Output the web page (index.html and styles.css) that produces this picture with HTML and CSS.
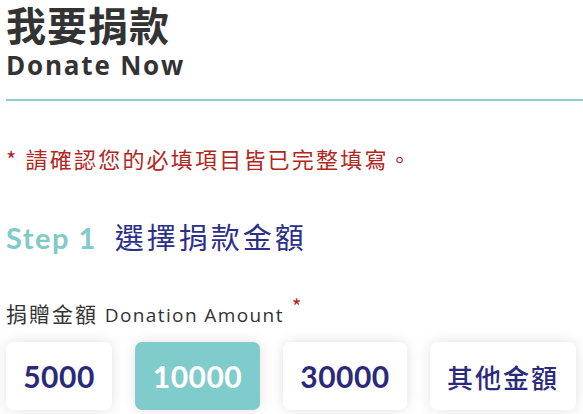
FILE: index.html
```html
<!DOCTYPE html>
<html lang="zh-Hant">
<head>
<meta charset="utf-8">
<link rel="stylesheet" href="styles.css">
</head>
<body>
<div class="page">
  <header class="head">
    <h1 class="title-zh">我要捐款</h1>
    <h2 class="title-en">Donate Now</h2>
  </header>
  <p class="notice">* 請確認您的必填項目皆已完整填寫。</p>
  <div class="step">
    <span class="step-no">Step 1</span>
    <span class="step-name">選擇捐款金額</span>
  </div>
  <div class="field-label">捐贈金額 <span class="en">Donation Amount</span><span class="req">*</span></div>
  <div class="amounts">
    <button class="amt amt-a">5000</button>
    <button class="amt amt-b active">10000</button>
    <button class="amt amt-c">30000</button>
    <button class="amt amt-d zh">其他金額</button>
  </div>
</div>
</body>
</html>
```
FILE: styles.css
```css
* { box-sizing: border-box; }
html, body { margin: 0; padding: 0; background: #fff; }
body { font-family: "Noto Sans CJK TC", "Noto Sans", sans-serif; }
.page { width: 583px; height: 414px; overflow: hidden; padding-left: 6px; }
.head { border-bottom: 2px solid #8fd0cf; padding-bottom: 17px; }
.title-zh {
  margin: 0; font-size: 40px; line-height: 48px; font-weight: 700;
  color: #333; letter-spacing: 1px;
}
.title-en {
  margin: 0; font-family: "Open Sans", sans-serif; font-size: 26px; line-height: 34px;
  font-weight: 700; color: #333; letter-spacing: 1.8px;
}
.notice {
  margin: 42px 0 0; font-size: 22px; line-height: 30px; color: #b3261e; letter-spacing: 2.2px;
}
.notice::first-letter { font-size: 24px; }
.step { margin-top: 42px; display: flex; align-items: baseline; gap: 18px; }
.step-no { font-family: "Lato", sans-serif; font-size: 29px; color: #80caca; font-weight: 700; letter-spacing: 1.5px; }
.step-name { font-size: 29px; color: #2b2f88; letter-spacing: 3px; }
.field-label { margin-top: 34px; font-size: 21px; color: #333; letter-spacing: 2px; line-height: 30px; }
.field-label .en { font-family: "Open Sans", sans-serif; font-size: 19px; letter-spacing: 1.4px; }
.req { color: #b3261e; font-size: 21px; vertical-align: 7px; margin-left: 8px; }
.amounts { display: flex; gap: 23px; margin-top: 12px; }
.amt {
  height: 68px; border: none; border-radius: 7px; background: #fff;
  box-shadow: 0 0 14px rgba(0,0,0,0.12);
  font-family: "Lato", sans-serif; font-weight: 700; font-size: 30px; color: #2b2a7a;
  padding: 0 16px; letter-spacing: 0.5px;
}
.amt-a { width: 106px; }
.amt-b { width: 125px; }
.amt-c { width: 124px; }
.amt-d { width: 146px; }
.amt.zh { font-family: "Noto Sans CJK TC", sans-serif; font-weight: 500; font-size: 26px; letter-spacing: 2px; }
.amt.active { background: #80cbcb; color: #fff; }
```
